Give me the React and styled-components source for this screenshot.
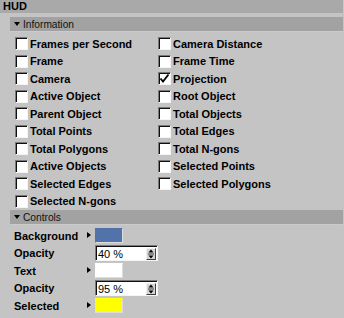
import React from 'react';
import styled, { createGlobalStyle } from 'styled-components';

const GlobalStyle = createGlobalStyle`
  html, body {
    margin: 0;
    padding: 0;
    background: #c4c4c4;
  }
`;

const Panel = styled.div`
  width: 344px;
  height: 318px;
  overflow: hidden;
  background: #c4c4c4;
  font-family: "Liberation Sans", Arial, sans-serif;
  color: #000;
  display: flex;
  flex-direction: column;
`;

const TitleBar = styled.div`
  height: 13px;
  line-height: 13px;
  padding-left: 3px;
  background: #a9a9a9;
  font-weight: bold;
  font-size: 11px;
  border-right: 1px solid #c8c8c8;
`;

const SectionHeader = styled.div`
  height: 14px;
  margin: ${(p) => p.$top}px 1px 0 10px;
  background: #a2a2a2;
  display: flex;
  align-items: center;
  gap: 2px;
  padding-left: 4px;
  font-size: 10.2px;
  color: #111;
  border-bottom: 1px solid #cbcbcb;
`;

const Caret = styled.span`
  width: 0;
  height: 0;
  border-left: 3px solid transparent;
  border-right: 3px solid transparent;
  border-top: 4px solid #000;
  margin-right: 1px;
`;

const CheckGrid = styled.div`
  display: grid;
  grid-template-columns: 143px 1fr;
  grid-auto-rows: 17.5px;
  padding-left: 15px;
  margin-top: 3px;
`;

const CheckItem = styled.label`
  display: flex;
  align-items: center;
  gap: 2px;
  font-weight: bold;
  font-size: 11px;
  white-space: nowrap;
`;

const Box = styled.span`
  box-sizing: border-box;
  width: 13px;
  height: 13px;
  background: #fff;
  border: 1px solid;
  border-color: #7a7a7a #f4f4f4 #f4f4f4 #7a7a7a;
  box-shadow: inset 1px 1px 0 #101010;
  display: flex;
  align-items: center;
  justify-content: center;
`;

const ControlsList = styled.div`
  display: flex;
  flex-direction: column;
  padding-left: 14px;
  margin-top: 2px;
`;

const ControlRow = styled.div`
  display: grid;
  grid-template-columns: 73px 8px auto;
  align-items: center;
  height: 17.5px;
  font-weight: bold;
  font-size: 11px;
`;

const Arrow = styled.span`
  width: 0;
  height: 0;
  border-top: 3.5px solid transparent;
  border-bottom: 3.5px solid transparent;
  border-left: 4px solid #000;
  margin-bottom: 2px;
`;

const Swatch = styled.span`
  box-sizing: border-box;
  width: 28px;
  height: 15px;
  background: ${(p) => p.$color};
  border: 1px solid;
  border-color: ${(p) => p.$color} #dcdcdc #dcdcdc ${(p) => p.$color};
`;

const Spinner = styled.div`
  box-sizing: border-box;
  width: 63px;
  height: 16px;
  background: #fff;
  border: 1px solid;
  border-color: #7a7a7a #f4f4f4 #f4f4f4 #7a7a7a;
  box-shadow: inset 1px 1px 0 #101010;
  display: flex;
  align-items: center;
  justify-content: space-between;
  padding: 1px 1px 0 2px;
`;

const SpinValue = styled.span`
  font-weight: normal;
  font-size: 11px;
  font-family: "Liberation Sans", Arial, sans-serif;
`;

const SpinButton = styled.span`
  box-sizing: border-box;
  width: 10px;
  height: 12px;
  background: #d4d4d4;
  border: 1px solid;
  border-color: #f0f0f0 #404040 #404040 #f0f0f0;
  display: flex;
  flex-direction: column;
  align-items: center;
  justify-content: space-around;
`;

const Check = () => (
  <svg width="11" height="11" viewBox="0 0 11 11">
    <path d="M1.5 5.5 L4 8.5 L9.5 1.5" fill="none" stroke="#000" strokeWidth="1.8" />
  </svg>
);

const SpinArrows = () => (
  <SpinButton>
    <svg width="6" height="10" viewBox="0 0 6 10">
      <path d="M3 0.5 L5.5 3.5 L0.5 3.5 Z" fill="#000" />
      <line x1="0" y1="5" x2="6" y2="5" stroke="#404040" strokeWidth="1" />
      <path d="M0.5 6.5 L5.5 6.5 L3 9.5 Z" fill="#000" />
    </svg>
  </SpinButton>
);

const options = [
  ['Frames per Second', false],
  ['Camera Distance', false],
  ['Frame', false],
  ['Frame Time', false],
  ['Camera', false],
  ['Projection', true],
  ['Active Object', false],
  ['Root Object', false],
  ['Parent Object', false],
  ['Total Objects', false],
  ['Total Points', false],
  ['Total Edges', false],
  ['Total Polygons', false],
  ['Total N-gons', false],
  ['Active Objects', false],
  ['Selected Points', false],
  ['Selected Edges', false],
  ['Selected Polygons', false],
  ['Selected N-gons', false],
];

const App = () => (
  <>
    <GlobalStyle />
    <Panel>
      <TitleBar>HUD</TitleBar>
      <SectionHeader $top={4}>
        <Caret />
        Information
      </SectionHeader>
      <CheckGrid>
        {options.map(([label, checked]) => (
          <CheckItem key={label}>
            <Box>{checked && <Check />}</Box>
            {label}
          </CheckItem>
        ))}
      </CheckGrid>
      <SectionHeader $top={0}>
        <Caret />
        Controls
      </SectionHeader>
      <ControlsList>
        <ControlRow>
          <span>Background</span>
          <Arrow />
          <Swatch $color="#5272aa" />
        </ControlRow>
        <ControlRow>
          <span>Opacity</span>
          <span />
          <Spinner>
            <SpinValue>40 %</SpinValue>
            <SpinArrows />
          </Spinner>
        </ControlRow>
        <ControlRow>
          <span>Text</span>
          <Arrow />
          <Swatch $color="#ffffff" />
        </ControlRow>
        <ControlRow>
          <span>Opacity</span>
          <span />
          <Spinner>
            <SpinValue>95 %</SpinValue>
            <SpinArrows />
          </Spinner>
        </ControlRow>
        <ControlRow>
          <span>Selected</span>
          <Arrow />
          <Swatch $color="#ffff00" />
        </ControlRow>
      </ControlsList>
    </Panel>
  </>
);

export default App;
